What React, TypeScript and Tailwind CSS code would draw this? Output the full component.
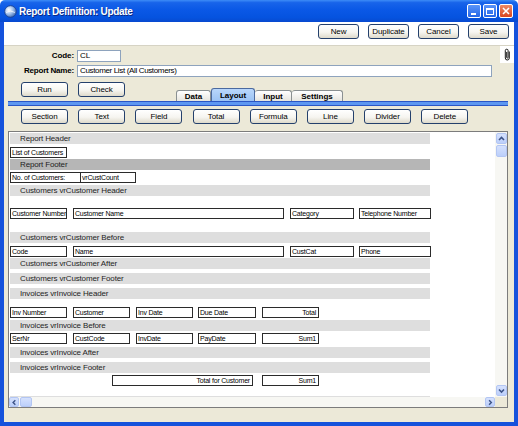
import React from "react";

const XBtn = ({ children, className = "" }: { children: React.ReactNode; className?: string }) => (
  <div
    className={`h-[15px] shrink-0 flex items-center justify-center rounded-[3px] border border-[#24406c] bg-[linear-gradient(180deg,#ffffff_0%,#f6f5f0_55%,#dedacb_100%)] text-[8px] leading-none text-black tracking-[-0.1px] ${className}`}
  >
    {children}
  </div>
);

const Band = ({ label, dark = false }: { label: string; dark?: boolean }) => (
  <div
    className={`h-[11px] w-[420px] shrink-0 pl-[10px] text-[8px] leading-[11px] text-[#1e1e1e] tracking-[-0.15px] whitespace-nowrap ${
      dark ? "bg-[#b6b6b6]" : "bg-[#dedede]"
    }`}
  >
    {label}
  </div>
);

const Field = ({ text, className = "", right = false }: { text: string; className?: string; right?: boolean }) => (
  <div
    className={`h-[11px] shrink-0 border border-[#2b2b2b] bg-white px-[1px] text-[7px] leading-[9px] tracking-[-0.2px] text-black whitespace-nowrap overflow-hidden ${
      right ? "text-right pr-[2px]" : ""
    } ${className}`}
  >
    {text}
  </div>
);

const Chevron = ({ dir }: { dir: "up" | "down" | "left" | "right" }) => {
  const d =
    dir === "up"
      ? "M2 6 L4.5 3.5 L7 6"
      : dir === "down"
      ? "M2 3.5 L4.5 6 L7 3.5"
      : dir === "left"
      ? "M6 2 L3.5 4.5 L6 7"
      : "M3.5 2 L6 4.5 L3.5 7";
  return (
    <svg width="9" height="9" viewBox="0 0 9 9">
      <path d={d} fill="none" stroke="#3d5488" strokeWidth="1.6" />
    </svg>
  );
};

const SBtn = ({ children, className = "" }: { children?: React.ReactNode; className?: string }) => (
  <div
    className={`flex items-center justify-center rounded-[2px] border border-[#b3c6f3] bg-[linear-gradient(180deg,#d5e1fd_0%,#bccffa_100%)] ${className}`}
  >
    {children}
  </div>
);

export default function App() {
  return (
    <div className="w-[518px] h-[426px] flex flex-col overflow-hidden font-['Liberation_Sans',Arial,sans-serif] select-none">
      {/* Title bar */}
      <div className="h-[22px] shrink-0 flex items-center pl-[4px] pr-[5px] rounded-t-[5px] bg-[linear-gradient(180deg,#3d8cf7_0%,#1864ea_12%,#0a58e6_45%,#0553df_80%,#0849cf_100%)]">
        <svg width="13" height="13" viewBox="0 0 13 13" className="shrink-0">
          <defs>
            <radialGradient id="gl" cx="0.35" cy="0.35" r="0.75">
              <stop offset="0" stopColor="#ffffff" />
              <stop offset="0.45" stopColor="#a9c7ee" />
              <stop offset="1" stopColor="#2d5fb0" />
            </radialGradient>
          </defs>
          <circle cx="6.5" cy="6.5" r="5.8" fill="url(#gl)" stroke="#1d3f86" strokeWidth="0.8" />
          <path d="M2 7.5 Q6.5 4.5 11 7.5" fill="none" stroke="#ffffff" strokeWidth="0.9" opacity="0.8" />
        </svg>
        <div className="ml-[2px] text-white font-bold text-[10px] tracking-[-0.3px] [text-shadow:1px_1px_0_#0b2a85] whitespace-nowrap">
          Report Definition: Update
        </div>
        <div className="flex-1" />
        <div className="flex gap-[2px]">
          <div className="w-[14px] h-[14px] rounded-[2px] border border-white bg-[linear-gradient(180deg,#5a95f8,#2466e8)] relative">
            <div className="absolute left-[3px] bottom-[2px] w-[5px] h-[2px] bg-white" />
          </div>
          <div className="w-[14px] h-[14px] rounded-[2px] border border-white bg-[linear-gradient(180deg,#5a95f8,#2466e8)] flex items-center justify-center">
            <div className="w-[8px] h-[7px] border border-white border-t-2" />
          </div>
          <div className="w-[14px] h-[14px] rounded-[2px] border border-white bg-[linear-gradient(180deg,#ef8a66,#d6451f)] flex items-center justify-center">
            <svg width="8" height="8" viewBox="0 0 8 8">
              <path d="M1 1 L7 7 M7 1 L1 7" stroke="#ffffff" strokeWidth="1.6" />
            </svg>
          </div>
        </div>
      </div>

      {/* Window body */}
      <div className="flex-1 flex flex-col border-x-4 border-b-4 border-[#1552dc] bg-[#ece9d8]">
        {/* Toolbar */}
        <div className="h-[24px] shrink-0 bg-white border-b border-[#d6d3c4] flex justify-end items-start gap-[9px] pr-[5px] pt-[2px]">
          <XBtn className="w-[41px]">New</XBtn>
          <XBtn className="w-[41px]">Duplicate</XBtn>
          <XBtn className="w-[41px]">Cancel</XBtn>
          <XBtn className="w-[41px]">Save</XBtn>
        </div>

        {/* Beige content */}
        <div className="flex-1 relative flex flex-col">
          <div className="absolute top-0 right-0 w-[14px] h-[17px] bg-white flex items-center justify-center">
            <svg width="7" height="13" viewBox="0 0 7 13">
              <path
                d="M5.3 3.5 V10 A2 2 0 0 1 1.3 10 V2.6 A1.4 1.4 0 0 1 4.1 2.6 V9.4 A0.7 0.7 0 0 1 2.7 9.4 V4"
                fill="none"
                stroke="#1a1a1a"
                strokeWidth="1"
              />
            </svg>
          </div>

          {/* Code row */}
          <div className="mt-[4px] h-[12px] flex items-center">
            <div className="w-[70px] text-right font-bold text-[8px] leading-[12px] tracking-[-0.1px]">Code:</div>
            <div className="ml-[3px] w-[44px] h-[12px] border border-[#8ea3bd] bg-white text-[8px] leading-[10px] pl-[2px]">CL</div>
          </div>
          {/* Report name row */}
          <div className="mt-[3px] h-[12px] flex items-center">
            <div className="w-[70px] text-right font-bold text-[8px] leading-[12px] tracking-[-0.2px] whitespace-nowrap">
              Report Name:
            </div>
            <div className="ml-[3px] w-[415px] h-[12px] border border-[#8ea3bd] bg-white text-[8px] leading-[10px] pl-[2px] tracking-[-0.35px] whitespace-nowrap">
              Customer List (All Customers)
            </div>
          </div>

          {/* Run / Check + tabs */}
          <div className="h-[24px] flex items-start pl-[17px]">
            <XBtn className="mt-[5px] w-[47px]">Run</XBtn>
            <XBtn className="mt-[5px] ml-[10px] w-[47px]">Check</XBtn>
            <div className="self-end ml-[51px] flex items-end">
              <div className="w-[35px] h-[11px] border border-b-0 border-[#8a9092] rounded-t-[3px] bg-[linear-gradient(180deg,#ffffff,#e6e5de)] text-center font-bold text-[8px] leading-[11px]">
                Data
              </div>
              <div className="w-[44px] h-[13px] border border-b-0 border-[#4b6a9f] rounded-t-[3px] bg-[linear-gradient(180deg,#b9d7fb,#9cc3f4)] text-center font-bold text-[8px] leading-[13px]">
                Layout
              </div>
              <div className="w-[37px] h-[11px] border border-b-0 border-l-0 border-[#8a9092] rounded-t-[3px] bg-[linear-gradient(180deg,#ffffff,#e6e5de)] text-center font-bold text-[8px] leading-[11px]">
                Input
              </div>
              <div className="w-[51px] h-[11px] border border-b-0 border-l-0 border-[#8a9092] rounded-t-[3px] bg-[linear-gradient(180deg,#ffffff,#e6e5de)] text-center font-bold text-[8px] leading-[11px]">
                Settings
              </div>
            </div>
          </div>
          {/* Blue bar */}
          <div className="ml-[4px] mr-[6px] h-[5px] border-y border-[#2a56c6] bg-[#5d97f1]" />

          {/* Tool buttons */}
          <div className="mt-[3px] h-[15px] flex gap-[10.2px] pl-[17px]">
            {["Section", "Text", "Field", "Total", "Formula", "Line", "Divider", "Delete"].map((b) => (
              <XBtn key={b} className="w-[47px]">
                {b}
              </XBtn>
            ))}
          </div>

          {/* Canvas */}
          <div className="mt-[7px] ml-[4px] mr-[6px] h-[277px] border border-[#7c7c7c] bg-white flex flex-col">
            <div className="flex-1 flex min-h-0">
              <div className="flex-1 overflow-hidden pt-[1px] pl-[1px] flex flex-col">
                <Band label="Report Header" />
                <div className="h-[15px] shrink-0 pt-[3px] flex">
                  <Field text="List of Customers" className="w-[57px]" />
                </div>
                <Band label="Report Footer" dark />
                <div className="h-[15px] shrink-0 pt-[2px] flex">
                  <Field text="No. of Customers:" className="w-[71px]" />
                  <Field text="vrCustCount" className="-ml-px w-[56px]" />
                </div>
                <Band label="Customers vrCustomer Header" />
                <div className="h-[36px] shrink-0 pt-[12px] flex">
                  <Field text="Customer Number" className="w-[57px] px-0" />
                  <Field text="Customer Name" className="ml-[6px] w-[211px]" />
                  <Field text="Category" className="ml-[6px] w-[64px]" />
                  <Field text="Telephone Number" className="ml-[5px] w-[72px]" />
                </div>
                <Band label="Customers vrCustomer Before" />
                <div className="h-[15px] shrink-0 pt-[3px] flex">
                  <Field text="Code" className="w-[57px]" />
                  <Field text="Name" className="ml-[6px] w-[211px]" />
                  <Field text="CustCat" className="ml-[6px] w-[64px]" />
                  <Field text="Phone" className="ml-[5px] w-[72px]" />
                </div>
                <Band label="Customers vrCustomer After" />
                <div className="h-[4px] shrink-0" />
                <Band label="Customers vrCustomer Footer" />
                <div className="h-[4px] shrink-0" />
                <Band label="Invoices vrInvoice Header" />
                <div className="h-[21px] shrink-0 pt-[8px] flex">
                  <Field text="Inv Number" className="w-[57px]" />
                  <Field text="Customer" className="ml-[6px] w-[57px]" />
                  <Field text="Inv Date" className="ml-[6px] w-[57px]" />
                  <Field text="Due Date" className="ml-[5px] w-[58px]" />
                  <Field text="Total" right className="ml-[6px] w-[57px]" />
                </div>
                <Band label="Invoices vrInvoice Before" />
                <div className="h-[16px] shrink-0 pt-[2px] flex">
                  <Field text="SerNr" className="w-[57px]" />
                  <Field text="CustCode" className="ml-[6px] w-[57px]" />
                  <Field text="InvDate" className="ml-[6px] w-[57px]" />
                  <Field text="PayDate" className="ml-[5px] w-[58px]" />
                  <Field text="Sum1" right className="ml-[6px] w-[57px]" />
                </div>
                <Band label="Invoices vrInvoice After" />
                <div className="h-[4px] shrink-0" />
                <Band label="Invoices vrInvoice Footer" />
                <div className="h-[23px] shrink-0 pt-[2px] flex">
                  <Field text="Total for Customer" right className="ml-[102px] w-[141px]" />
                  <Field text="Sum1" right className="ml-[9px] w-[57px]" />
                </div>
                <Band label="" />
              </div>
              {/* Vertical scrollbar */}
              <div className="w-[12px] shrink-0 bg-[#f7f7f3] flex flex-col items-center py-[1px]">
                <SBtn className="w-[11px] h-[11px]">
                  <Chevron dir="up" />
                </SBtn>
                <SBtn className="mt-[1px] w-[11px] h-[12px]" />
                <div className="flex-1" />
                <SBtn className="w-[11px] h-[11px]">
                  <Chevron dir="down" />
                </SBtn>
              </div>
            </div>
            {/* Horizontal scrollbar */}
            <div className="h-[10px] shrink-0 flex">
              <div className="flex-1 flex items-center bg-[#f7f7f3]">
                <SBtn className="w-[10px] h-[10px]">
                  <Chevron dir="left" />
                </SBtn>
                <SBtn className="ml-[1px] w-[12px] h-[10px]" />
                <div className="flex-1" />
                <SBtn className="w-[10px] h-[10px]">
                  <Chevron dir="right" />
                </SBtn>
              </div>
              <div className="w-[12px] shrink-0 bg-[#ece9d8]" />
            </div>
          </div>
        </div>
      </div>
    </div>
  );
}
